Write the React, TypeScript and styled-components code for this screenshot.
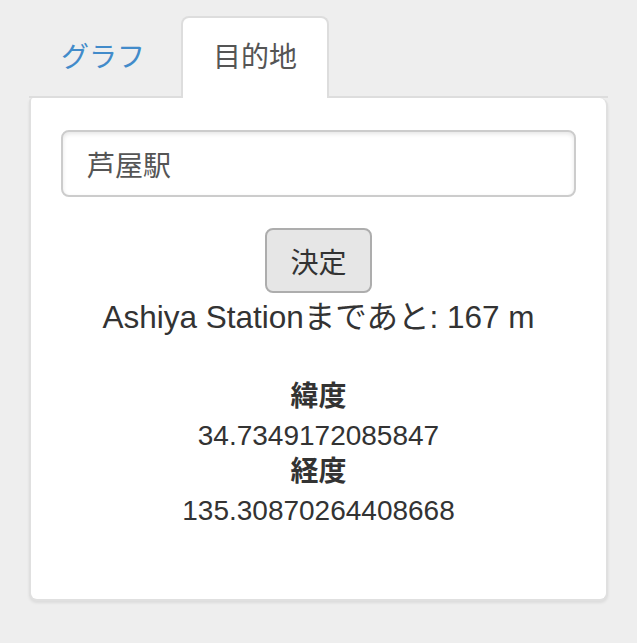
import React from "react";
import styled, { createGlobalStyle } from "styled-components";

const GlobalStyle = createGlobalStyle`
  html, body {
    margin: 0;
    padding: 0;
    background: #eeeeee;
  }
  body {
    font-family: "Liberation Sans", "Noto Sans CJK JP", Arial, sans-serif;
    color: #333333;
  }
  * { box-sizing: border-box; }
`;

const Page = styled.div`
  padding: 16px 29px 40px 29px;
`;

const TabBar = styled.ul`
  display: flex;
  list-style: none;
  margin: 0;
  padding: 0;
  border-bottom: 2px solid #dddddd;
`;

const Tab = styled.li<{ $active?: boolean }>`
  margin: 0 4px -2px 0;
  padding: 20px 30px;
  line-height: 40px;
  font-size: 28px;
  border: 2px solid ${(p) => (p.$active ? "#dddddd" : "transparent")};
  border-bottom: none;
  border-radius: 8px 8px 0 0;
  background: ${(p) => (p.$active ? "#ffffff" : "transparent")};
  color: ${(p) => (p.$active ? "#555555" : "#428bca")};
  height: 82px;
  cursor: pointer;
`;

const Panel = styled.div`
  background: #ffffff;
  border: 2px solid #e0e0e0;
  border-top: none;
  border-radius: 4px 8px 8px 8px;
  box-shadow: 0 2px 3px rgba(0, 0, 0, 0.08);
  padding: 32px 30px 30px 30px;
  display: flex;
  flex-direction: column;
  align-items: center;
`;

const Input = styled.input`
  width: 100%;
  height: 67px;
  padding: 0 24px;
  font-family: inherit;
  font-size: 28px;
  color: #555555;
  border: 2px solid #cccccc;
  border-radius: 8px;
  box-shadow: inset 0 2px 4px rgba(0, 0, 0, 0.1);
  outline: none;
  background: #ffffff;
`;

const Button = styled.button`
  margin-top: 31px;
  width: 107px;
  height: 65px;
  font-family: inherit;
  font-size: 28px;
  color: #333333;
  background: #e6e6e6;
  border: 2px solid #adadad;
  border-radius: 8px;
  padding: 0;
`;

const Distance = styled.p`
  margin: 2px 0 0 0;
  font-size: 31.5px;
  line-height: 44px;
  color: #333333;
  text-align: center;
`;

const Coords = styled.dl`
  margin: 39px 0 41px 0;
  text-align: center;
`;

const Label = styled.dt`
  font-size: 28px;
  line-height: 34px;
  font-weight: bold;
  padding-top: 2px;
  margin-bottom: 5px;
`;

const Value = styled.dd`
  margin: 0;
  font-size: 28px;
  line-height: 34px;
`;

export default function App() {
  return (
    <>
      <GlobalStyle />
      <Page>
        <TabBar>
          <Tab>グラフ</Tab>
          <Tab $active>目的地</Tab>
        </TabBar>
        <Panel>
          <Input defaultValue="芦屋駅" />
          <Button>決定</Button>
          <Distance>Ashiya Stationまであと: 167 m</Distance>
          <Coords>
            <Label>緯度</Label>
            <Value>34.7349172085847</Value>
            <Label>経度</Label>
            <Value>135.30870264408668</Value>
          </Coords>
        </Panel>
      </Page>
    </>
  );
}
